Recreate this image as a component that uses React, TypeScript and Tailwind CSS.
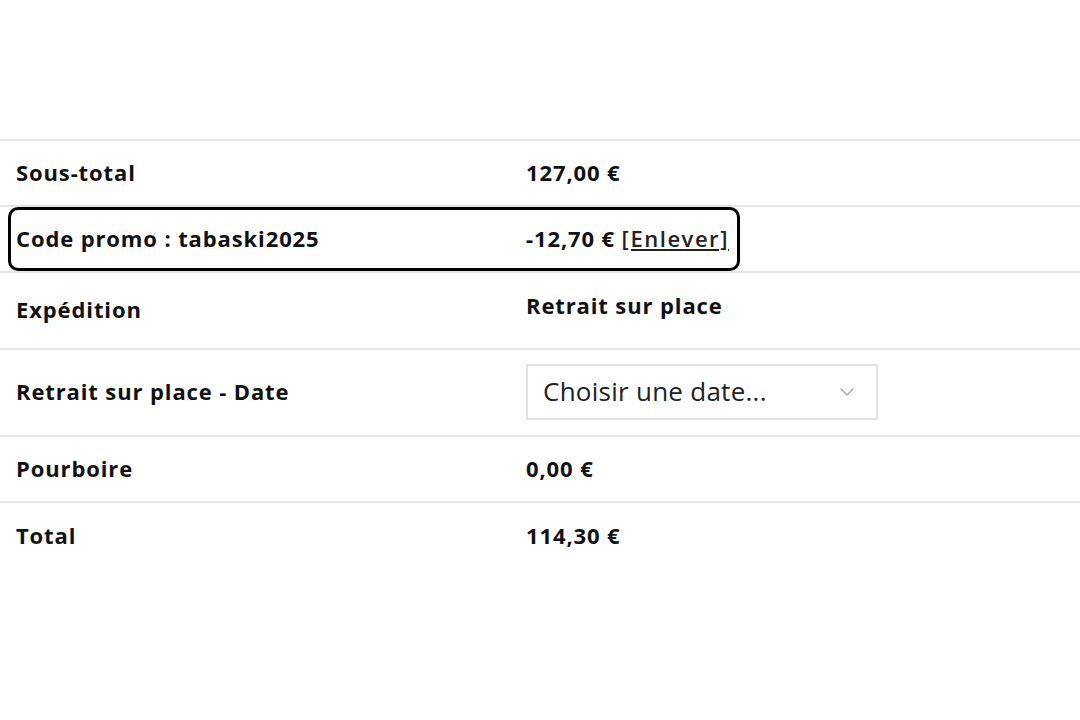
import { ChevronDown } from "lucide-react"

const font = { fontFamily: "'Open Sans', Lato, sans-serif" }

function Row({ label, children, h, alignTop }: { label: string; children: React.ReactNode; h: string; alignTop?: boolean }) {
    return (
        <div className={`relative flex border-b-2 border-[#e5e5e5] ${h}`}>
            <div className="w-[526px] pl-4 pb-[2px] flex items-center text-[22px] font-bold text-[#111] tracking-[0.04em]">{label}</div>
            <div className={`flex-1 flex ${alignTop ? "items-start pt-[16px]" : "items-center pb-[2px]"} text-[22px] font-bold text-[#111] tracking-[0.04em]`}>
                {children}
            </div>
        </div>
    )
}

export default function App() {
    return (
        <div className="w-[1080px] h-[720px] bg-white" style={font}>
            <div className="h-[139px]" />
            <div className="border-t-2 border-[#e5e5e5]">
                <Row label="Sous-total" h="h-[66px]">127,00 €</Row>
                <Row label="Code promo : tabaski2025" h="h-[66px]">
                    <span>-12,70 €&nbsp;</span>
                    <a className="font-semibold underline underline-offset-2 text-[#222] tracking-[0.07em]">[Enlever]</a>
                    <div className="absolute left-[8px] top-[0px] w-[732px] h-[64px] border-[3px] border-black rounded-[10px] pointer-events-none" />
                </Row>
                <Row label="Expédition" h="h-[77px]" alignTop>Retrait sur place</Row>
                <Row label="Retrait sur place - Date" h="h-[87px]">
                    <div className="w-[352px] h-[56px] border-2 border-[#e2e2e2] flex items-center justify-between pl-[15px] pr-[17px] font-normal text-[26px] text-[#222] tracking-[0.01em]">
                        <span>Choisir une date...</span>
                        <ChevronDown className="w-[24px] h-[24px] text-[#aaa]" strokeWidth={1.5} />
                    </div>
                </Row>
                <Row label="Pourboire" h="h-[66px]">0,00 €</Row>
                <div className="flex h-[66px]">
                    <div className="w-[526px] pl-4 pb-[2px] flex items-center text-[22px] font-bold text-[#111] tracking-[0.04em]">Total</div>
                    <div className="flex-1 flex items-center pb-[2px] text-[22px] font-bold text-[#111] tracking-[0.04em]">114,30 €</div>
                </div>
            </div>
        </div>
    )
}
